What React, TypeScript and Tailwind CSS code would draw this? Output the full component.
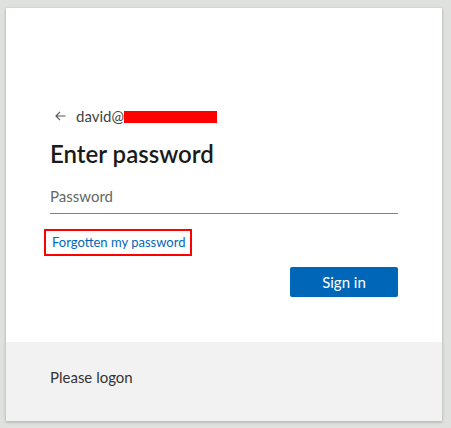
const BackArrow = () => (
  <svg width="11" height="10" viewBox="0 0 11 10" fill="none" stroke="#555" strokeWidth="1.1">
    <path d="M10.5 5H1M5 0.8L0.9 5L5 9.2" />
  </svg>
);

export default function App() {
  return (
    <div className="min-h-[428px] bg-[#dfe1de] pt-2 pl-[6px] font-['Lato',sans-serif]">
      <div className="w-[436px] h-[413px] bg-white shadow-[0_1px_3px_rgba(0,0,0,0.25)] flex flex-col">
        <div className="flex-1 px-[44px] pt-[96px]">
          <div className="flex items-center h-6 text-[15px] text-[#444]">
            <span className="ml-[5px] mr-[10px] flex items-center">
              <BackArrow />
            </span>
            <span>david@</span>
            <span className="inline-block w-[93px] h-[12px] bg-[#ff0000] mt-[2px]" />
          </div>
          <h1 className="mt-[10px] text-[24px] leading-8 font-semibold text-[#1b1b1b]">Enter password</h1>
          <div className="mt-[8px] h-[36px] border-b border-[#808080] flex items-center pt-[2px] text-[15px] text-[#666]">
            Password
          </div>
          <div className="mt-[15px] -ml-[6px] w-[148px] h-[27px] border-2 border-[#ff0000] flex items-center pl-[6px]">
            <a className="text-[13px] text-[#0067b8] whitespace-nowrap">Forgotten my password</a>
          </div>
          <div className="mt-[11px] flex justify-end">
            <button className="w-[108px] h-[30px] bg-[#0067b8] text-white text-[15px] rounded-[2px]">Sign in</button>
          </div>
        </div>
        <div className="h-[79px] bg-[#f2f2f2] px-[44px] pt-[25px] text-[15px] leading-5 text-[#333]">
          Please logon
        </div>
      </div>
    </div>
  );
}
